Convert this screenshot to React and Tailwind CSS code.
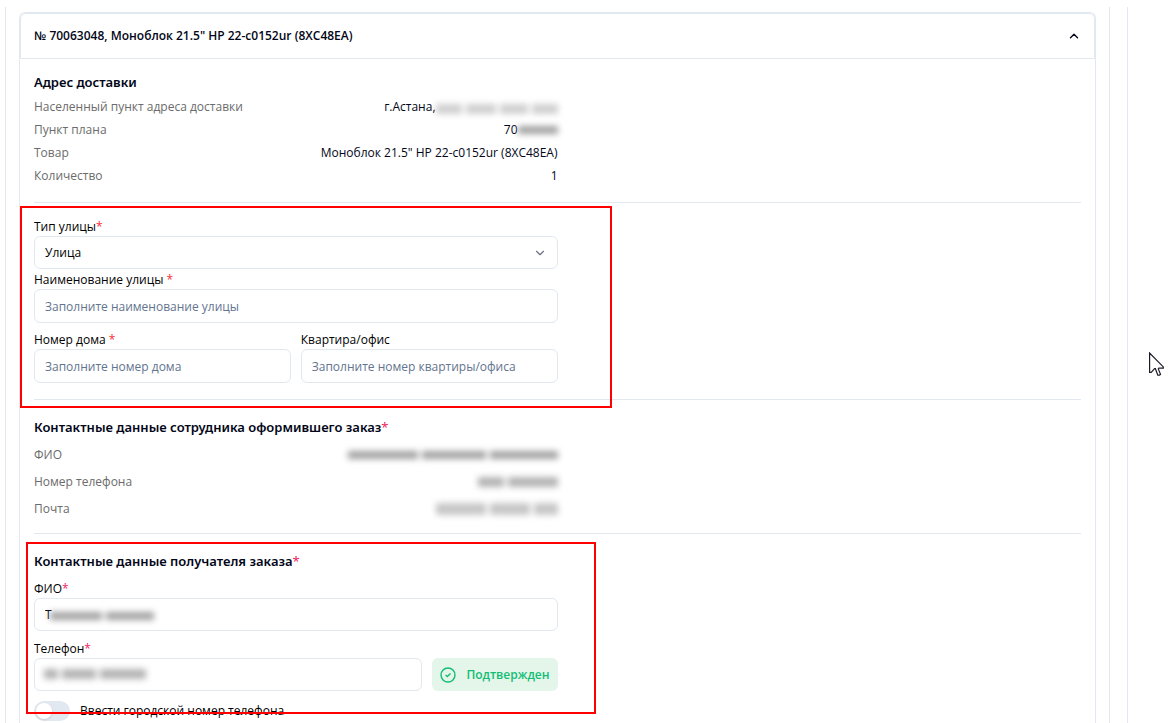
import React, { useState } from "react";
import { ChevronDown, ChevronUp } from "lucide-react";

const inputClass =
  "block w-full rounded-md border border-slate-200 bg-white px-[10px] text-xs text-black placeholder:text-slate-500 focus:outline-none";

// smudge that hides personal data, one bar per word
const Hidden = ({ words, className = "h-2" }) => (
  <span aria-hidden="true" className={`flex gap-1 blur-[3px] ${className}`}>
    {words.map((w, i) => (
      <span key={i} className="h-full bg-neutral-400" style={{ width: w }} />
    ))}
  </span>
);

const Label = ({ htmlFor, children }) => (
  <label htmlFor={htmlFor} className="block text-xs leading-[18px] text-black">
    {children}
  </label>
);

const Title = ({ children, required }) => (
  <h3 className="font-['Noto_Sans',sans-serif] text-[13px] leading-5 font-semibold text-slate-950">
    {children}
    {required && <span className="font-normal text-[#f0245e]">*</span>}
  </h3>
);

const Row = ({ label, children, className }) => (
  <div className={`flex items-center justify-between text-xs ${className}`}>
    <dt className="text-[#6b6b6b]">{label}</dt>
    <dd className="flex items-center text-slate-950">{children}</dd>
  </div>
);

const CheckCircle = () => (
  <svg width="16" height="16" viewBox="0 0 16 16" fill="none" stroke="currentColor" strokeWidth="1.4">
    <circle cx="8" cy="8" r="7" />
    <path d="M5.6 8 7.3 9.6 10.5 6.5" />
  </svg>
);

const Cursor = () => (
  <svg
    className="absolute top-[352px] left-[1149px]"
    width="16"
    height="25"
    viewBox="0 0 16 25"
    fill="white"
    stroke="#1c1c28"
    strokeWidth="1.2"
  >
    <path d="M.6 1v19.3h1.6l3.4-3.6h.8l2.4 6.4h1.8l.9-.8-2.2-5.4.6-.8h4.4v-1.2z" />
  </svg>
);

export default function App() {
  const [open, setOpen] = useState(true);
  const [cityPhone, setCityPhone] = useState(false);

  return (
    <div className="relative flex min-h-screen bg-white pt-[7px] pr-[43px] pl-[5px] font-['Open_Sans','Noto_Sans',sans-serif]">
      <div className="flex flex-1 border-r border-slate-200 pr-[17px]">
        <div className="flex flex-1 border-x border-slate-200 px-[13px] pt-[5px]">
          <section className="flex-1 rounded-t-md border border-b-0 border-slate-200">
            <button
              type="button"
              aria-expanded={open}
              onClick={() => setOpen(!open)}
              className="flex h-[46px] w-full items-center justify-between rounded-t-md border border-slate-200 px-[13px] text-xs font-semibold text-slate-950"
            >
              <span>№ 70063048, Моноблок 21.5" HP 22-c0152ur (8XC48EA)</span>
              <ChevronUp size={14} strokeWidth={2.4} />
            </button>

            {open && (
              <div className="px-[14px]">
                <div className="border-b border-slate-200 pt-[13px] pb-[15px]">
                  <Title>Адрес доставки</Title>
                  <dl className="w-1/2 pt-[3px]">
                    <Row label="Населенный пункт адреса доставки" className="h-[23px]">
                      г.Астана,
                      <Hidden words={[26, 30, 28, 26]} className="mt-1 h-[10px] opacity-50" />
                    </Row>
                    <Row label="Пункт плана" className="h-[23px]">
                      70
                      <Hidden words={[40]} />
                    </Row>
                    <Row label="Товар" className="h-[23px]">
                      Моноблок 21.5" HP 22-c0152ur (8XC48EA)
                    </Row>
                    <Row label="Количество" className="h-[23px]">
                      1
                    </Row>
                  </dl>
                </div>

                <div className="border-b border-slate-200 pt-[15px] pb-4">
                  <div className="w-1/2">
                    <Label htmlFor="streetType">
                      Тип улицы<span className="text-red-500">*</span>
                    </Label>
                    <div className="relative">
                      <select id="streetType" className={`${inputClass} h-[33px] appearance-none`}>
                        <option>Улица</option>
                      </select>
                      <ChevronDown
                        size={14}
                        strokeWidth={2}
                        className="pointer-events-none absolute top-[10px] right-[11px] text-gray-500"
                      />
                    </div>
                    <div className="mt-[2px]">
                      <Label htmlFor="street">
                        Наименование улицы <span className="text-red-500">*</span>
                      </Label>
                      <input
                        id="street"
                        placeholder="Заполните наименование улицы"
                        className={`${inputClass} h-[34px]`}
                      />
                    </div>
                    <div className="mt-2 grid grid-cols-2 gap-[10px]">
                      <div>
                        <Label htmlFor="house">
                          Номер дома <span className="text-red-500">*</span>
                        </Label>
                        <input
                          id="house"
                          placeholder="Заполните номер дома"
                          className={`${inputClass} h-[34px]`}
                        />
                      </div>
                      <div>
                        <Label htmlFor="flat">Квартира/офис</Label>
                        <input
                          id="flat"
                          placeholder="Заполните номер квартиры/офиса"
                          className={`${inputClass} h-[34px]`}
                        />
                      </div>
                    </div>
                  </div>
                </div>

                <div className="border-b border-slate-200 pt-[17px] pb-[11px]">
                  <Title required>Контактные данные сотрудника оформившего заказ</Title>
                  <dl className="w-1/2 pt-1">
                    <Row label="ФИО" className="h-[27px]">
                      <Hidden words={[70, 64, 68]} />
                    </Row>
                    <Row label="Номер телефона" className="h-[27px]">
                      <Hidden words={[26, 50]} className="h-[10px] opacity-80" />
                    </Row>
                    <Row label="Почта" className="h-[27px]">
                      <Hidden words={[50, 40, 24]} className="h-3 opacity-60" />
                    </Row>
                  </dl>
                </div>

                <div className="pt-[17px]">
                  <Title required>Контактные данные получателя заказа</Title>
                  <div className="w-1/2 pt-[9px]">
                    <Label htmlFor="fio">
                      ФИО<span className="text-[#f0245e]">*</span>
                    </Label>
                    <div className="relative">
                      <input id="fio" defaultValue="Т" className={`${inputClass} h-[33px]`} />
                      <Hidden words={[52, 48]} className="absolute top-[14px] left-4 h-2" />
                    </div>
                    <div className="mt-[9px]">
                      <Label htmlFor="phone">
                        Телефон<span className="text-[#f0245e]">*</span>
                      </Label>
                      <div className="flex gap-[10px]">
                        <div className="relative flex-1">
                          <input id="phone" type="tel" className={`${inputClass} h-[33px]`} />
                          <Hidden
                            words={[14, 34, 46]}
                            className="absolute top-[11px] left-[10px] h-[10px] opacity-80"
                          />
                        </div>
                        <div className="flex h-[33px] w-[126px] items-center justify-between rounded-md bg-[#e4f5ea] px-2 text-xs font-semibold text-[#12bd74]">
                          <CheckCircle />
                          Подтвержден
                        </div>
                      </div>
                    </div>
                    <label className="mt-[10px] flex items-center gap-[10px] text-xs leading-5 text-black">
                      <input
                        type="checkbox"
                        role="switch"
                        checked={cityPhone}
                        onChange={(e) => setCityPhone(e.target.checked)}
                        className="h-5 w-9 appearance-none rounded-full bg-slate-200 p-[2px] before:block before:size-4 before:rounded-full before:bg-white before:shadow checked:bg-emerald-500 checked:before:ml-4"
                      />
                      Ввести городской номер телефона
                    </label>
                  </div>
                </div>
              </div>
            )}
          </section>
        </div>
      </div>

      {/* highlight frames and pointer above the form */}
      <div className="pointer-events-none absolute top-[206px] left-[20px] h-[202px] w-[592px] border-2 border-[#ff0000]" />
      <div className="pointer-events-none absolute top-[542px] left-[26px] h-[172px] w-[570px] border-2 border-[#ff0000]" />
      <Cursor />
    </div>
  );
}
